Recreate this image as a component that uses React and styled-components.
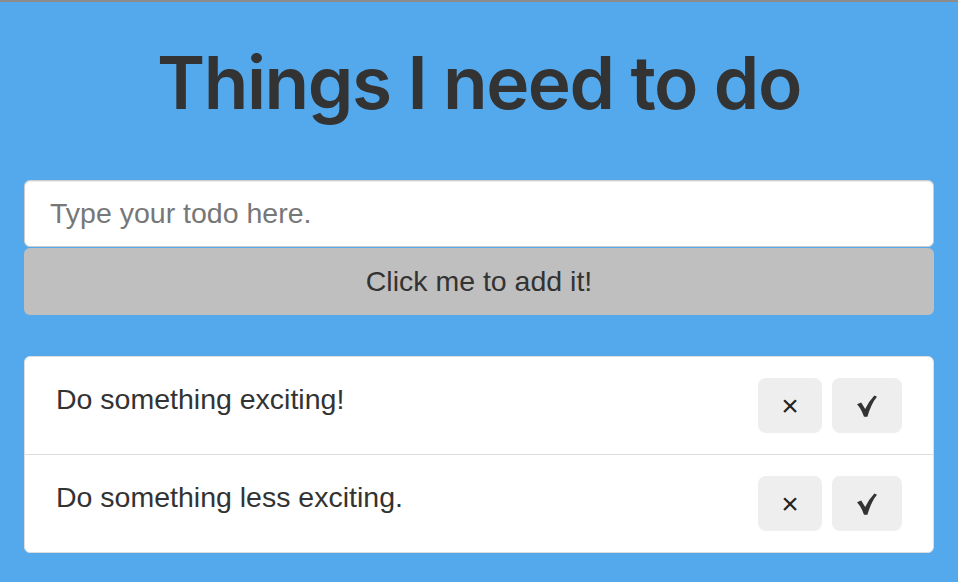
import styled, { createGlobalStyle } from 'styled-components';

const GlobalStyle = createGlobalStyle`
    html, body {
        margin: 0;
        padding: 0;
        background-color: #54a9ec;
    }
    body {
        font-family: "Liberation Sans", Arial, sans-serif;
        color: #333333;
    }
`;

const Page = styled.div`
    min-height: 582px;
    box-sizing: border-box;
    border-top: 2px solid #8c8c8c;
    padding: 0 24px;
    background-color: #54a9ec;
`;

const Title = styled.h1`
    margin: 40px 0 56px;
    text-align: center;
    font-family: Inter, "Liberation Sans", sans-serif;
    font-size: 73px;
    line-height: 82px;
    font-weight: 600;
    letter-spacing: -1.5px;
    color: #333333;
`;

const TodoForm = styled.form`
    display: flex;
    flex-direction: column;
    gap: 1px;
    margin: 0;
`;

const TodoInput = styled.input`
    box-sizing: border-box;
    height: 67px;
    width: 100%;
    padding: 0 25px;
    border: 1px solid #cccccc;
    border-radius: 6px;
    background: #ffffff;
    box-shadow: inset 0 1px 1px rgba(0, 0, 0, 0.075);
    font-family: inherit;
    font-size: 28.5px;
    color: #333333;
    outline: none;

    &::placeholder {
        color: #777777;
    }
`;

const AddButton = styled.button`
    height: 67px;
    width: 100%;
    border: none;
    border-radius: 6px;
    background-color: #bfbfbf;
    font-family: inherit;
    font-size: 28.5px;
    color: #333333;
    cursor: pointer;
`;

const TodoList = styled.ul`
    list-style: none;
    margin: 41px 0 0;
    padding: 0;
    border: 1px solid #dddddd;
    border-radius: 6px;
    background-color: #ffffff;
    overflow: hidden;
`;

const TodoItem = styled.li`
    display: flex;
    justify-content: space-between;
    align-items: flex-start;
    padding: 21px 31px 21px 31px;
    border-top: ${props => props.first ? 'none' : '1px solid #dddddd'};
`;

const TodoText = styled.span`
    font-size: 28.5px;
    line-height: 42px;
    color: #333333;
`;

const Actions = styled.div`
    display: flex;
    gap: 10px;
`;

const ActionButton = styled.button`
    display: flex;
    align-items: center;
    justify-content: center;
    width: ${props => props.wide ? '70px' : '64px'};
    height: 55px;
    padding: 0;
    border: none;
    border-radius: 8px;
    background-color: #eeeeee;
    font-family: inherit;
    font-size: 30px;
    color: #222222;
    cursor: pointer;
`;

const CheckIcon = () => (
    <svg width="20" height="22" viewBox="0 0 20 22">
        <path
            d="M0 9.2 L4.2 7.4 L8.2 14 Q12 6.2 17.4 0.6 L20 1.8 Q14.2 8.6 10.4 21.8 L7 21.8 Q4.4 14 0 9.2 Z"
            fill="#333333"
        />
    </svg>
);

const todos = [
    'Do something exciting!',
    'Do something less exciting.',
];

const App = () => {
    return (
        <Page>
            <GlobalStyle />
            <Title>Things I need to do</Title>
            <TodoForm onSubmit={e => e.preventDefault()}>
                <TodoInput type="text" placeholder="Type your todo here." />
                <AddButton type="submit">Click me to add it!</AddButton>
            </TodoForm>
            <TodoList>
                {todos.map((todo, i) => (
                    <TodoItem key={todo} first={i === 0}>
                        <TodoText>{todo}</TodoText>
                        <Actions>
                            <ActionButton>×</ActionButton>
                            <ActionButton wide><CheckIcon /></ActionButton>
                        </Actions>
                    </TodoItem>
                ))}
            </TodoList>
        </Page>
    );
}

export default App
